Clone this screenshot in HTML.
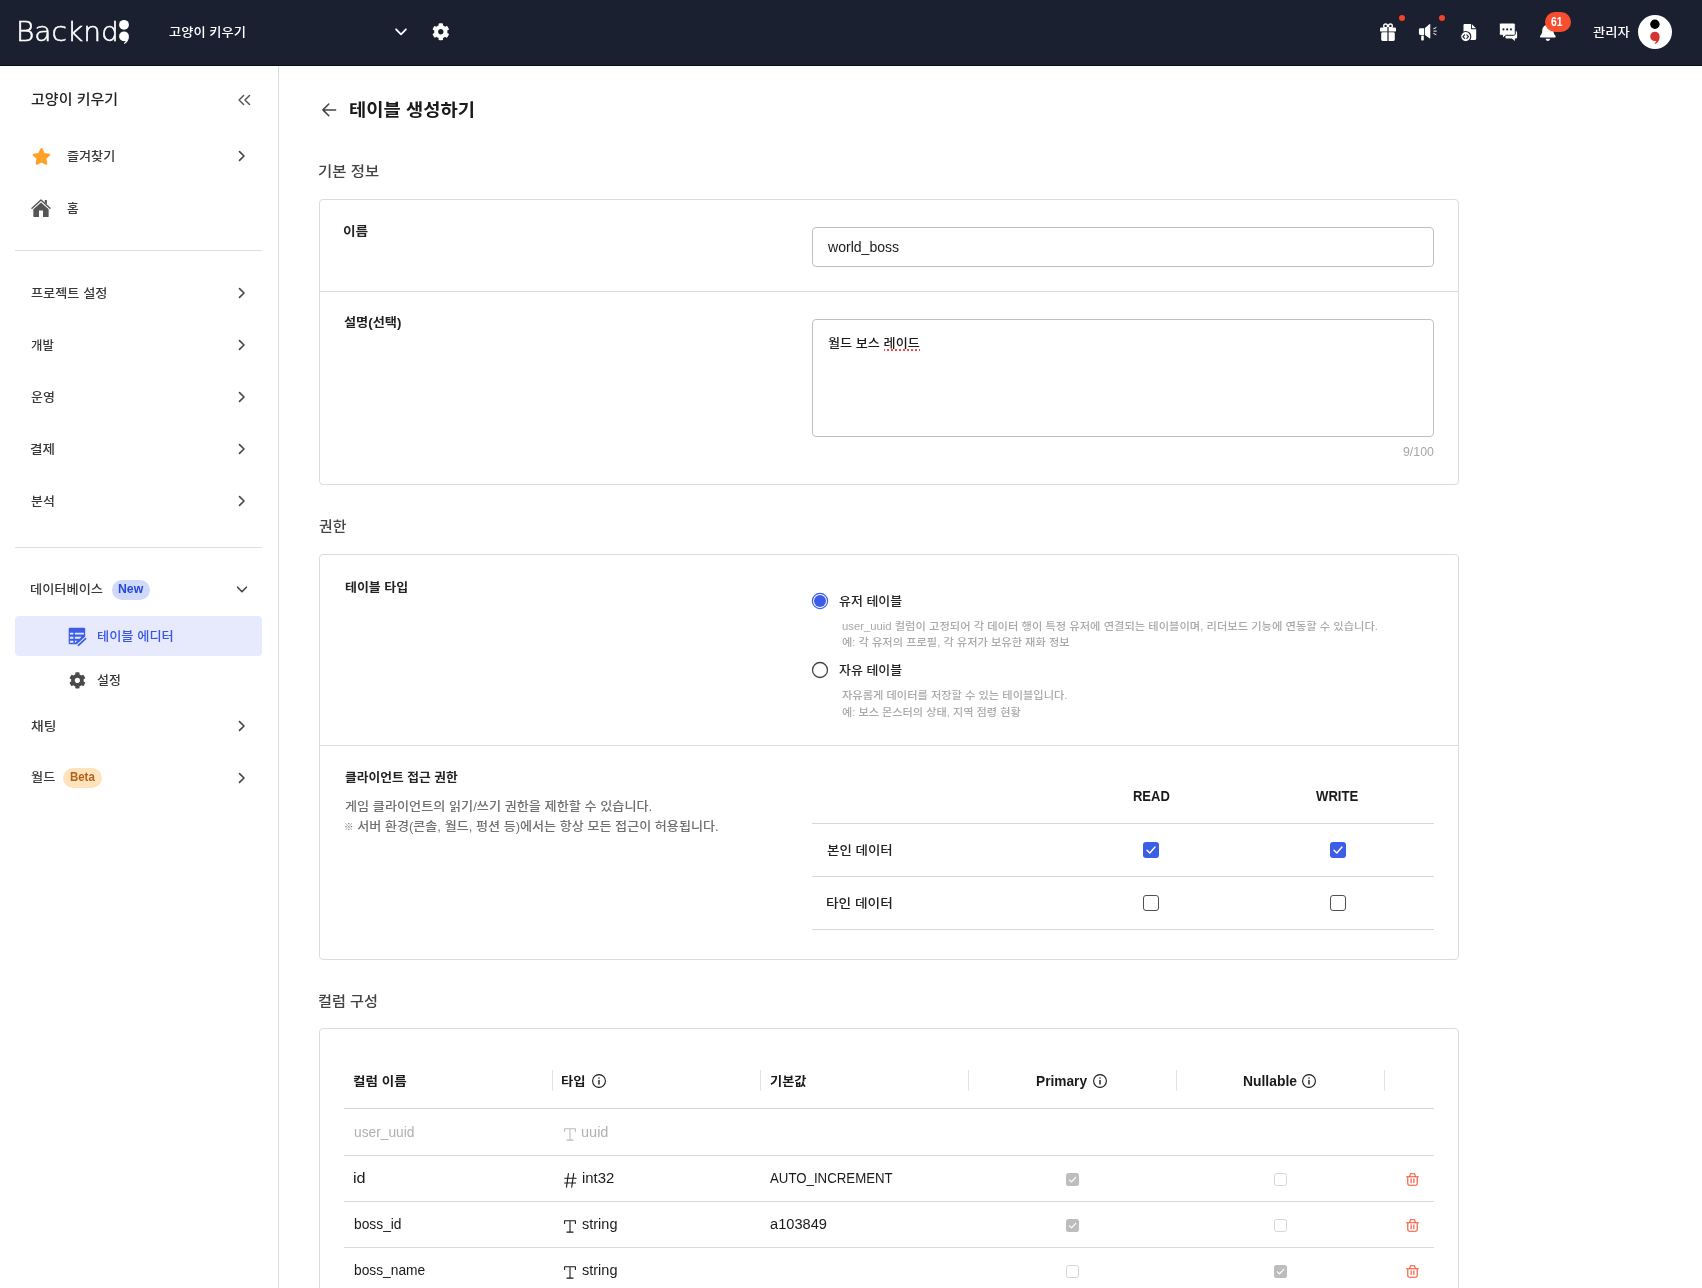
<!DOCTYPE html>
<html lang="ko">
<head>
<meta charset="utf-8">
<title>테이블 생성하기</title>
<style>
*{box-sizing:border-box;margin:0;padding:0}
html,body{width:1702px;height:1288px;overflow:hidden;background:#fff}
body{font-family:"Liberation Sans","Noto Sans CJK KR",sans-serif;font-size:14px;color:#1f1f1f;position:relative}
.a{position:absolute}
.t{position:absolute;white-space:nowrap;line-height:20px;transform-origin:0 0}
#tx{position:absolute;left:0;top:0;width:1702px;height:1288px;will-change:transform}
svg{display:block;position:absolute;overflow:visible}
#hd{position:absolute;left:0;top:0;width:1702px;height:66px;background:#1b2030;border-bottom:1px solid #0c101d}
#sb{position:absolute;left:0;top:66px;width:279px;height:1222px;border-right:1px solid #dcdcdc;background:#fff}
.hr{position:absolute;height:1px;background:#dedede}
.card{position:absolute;left:319px;width:1140px;border:1px solid #dcdcdc;border-radius:4px;background:#fff}
.inp{position:absolute;left:812px;width:622px;border:1px solid #c0c0c0;border-radius:4px;background:#fff}
.cbk{position:absolute;width:16px;height:16px;border-radius:3px;background:#3b5de7}
.cbu{position:absolute;width:16px;height:16px;border-radius:3px;border:1.5px solid #505050;background:#fff}
.cg{position:absolute;width:13px;height:13px;border-radius:2.5px;background:#bdbdbd}
.cgu{position:absolute;width:13px;height:13px;border-radius:2.5px;border:1px solid #d6d6d6;background:#fff}
.vs{position:absolute;width:1px;height:21px;top:1070px;background:#e2e2e2}
</style>
</head>
<body>
<!-- ================= HEADER ================= -->
<div id="hd"></div>
<!-- logo dots -->
<svg style="left:117px;top:18px" width="14" height="28" viewBox="0 0 14 28">
  <circle cx="7" cy="6.8" r="4.9" fill="#fff"/>
  <path d="M7 13.4a4.9 4.9 0 1 1 0 9.8a4.9 4.9 0 0 1 0-9.8zM11.9 18.3c.2 3.2-1.2 5.9-4.4 7.6l-.6-.8c1.6-1.2 2.2-2.4 2-3.6z" fill="#fff"/>
</svg>
<!-- chevron down -->
<svg style="left:394px;top:27px" width="14" height="10" viewBox="0 0 14 10"><path d="M2.1 2.300l4.900 5 4.900-5" fill="none" stroke="#fff" stroke-width="1.8" stroke-linecap="round" stroke-linejoin="round"/></svg>
<!-- gear -->
<svg style="left:432.2px;top:23.2px" width="17.6" height="17.6" viewBox="0 0 512 512"><path fill="#fff" d="M487.4 315.700l-42.600-24.600c4.300-23.200 4.300-47 0-70.200l42.600-24.600c4.900-2.800 7.100-8.600 5.500-14-11.100-35.600-30-67.800-54.700-94.600-3.800-4.100-10-5.100-14.800-2.300L380.800 110c-17.900-15.400-38.500-27.300-60.800-35.100V25.800c0-5.600-3.900-10.500-9.400-11.700-36.700-8.200-74.300-7.800-109.200 0-5.500 1.200-9.400 6.100-9.400 11.700V75c-22.200 7.900-42.800 19.800-60.800 35.100L88.700 85.500c-4.900-2.800-11-1.900-14.800 2.300-24.700 26.700-43.600 58.900-54.700 94.600-1.700 5.400.6 11.200 5.500 14L67.300 221c-4.300 23.200-4.300 47 0 70.200l-42.600 24.600c-4.900 2.800-7.100 8.600-5.500 14 11.100 35.600 30 67.800 54.700 94.600 3.800 4.100 10 5.100 14.800 2.300l42.600-24.600c17.900 15.400 38.500 27.300 60.800 35.100v49.200c0 5.600 3.900 10.500 9.400 11.700 36.700 8.200 74.300 7.800 109.200 0 5.500-1.200 9.400-6.100 9.400-11.700v-49.200c22.200-7.900 42.800-19.800 60.800-35.100l42.600 24.600c4.900 2.800 11 1.900 14.800-2.300 24.700-26.700 43.600-58.900 54.700-94.600 1.500-5.500-.7-11.300-5.600-14.100zM256 336c-44.100 0-80-35.900-80-80s35.900-80 80-80 80 35.900 80 80-35.900 80-80 80z"/></svg>
<!-- gift -->
<svg style="left:1380px;top:23px" width="16" height="18" viewBox="0 0 16 18">
  <circle cx="5.6" cy="2.9" r="1.9" fill="none" stroke="#fff" stroke-width="1.4"/>
  <circle cx="10.4" cy="2.9" r="1.9" fill="none" stroke="#fff" stroke-width="1.4"/>
  <rect x="0" y="4.4" width="16" height="4.2" rx="1.2" fill="#fff"/>
  <rect x="1.2" y="9.2" width="13.6" height="8.8" rx="1.4" fill="#fff"/>
  <rect x="7.4" y="4" width="1.2" height="14.2" fill="#1b2030"/>
</svg>
<div class="a" style="left:1399px;top:15px;width:6px;height:6px;border-radius:3px;background:#f5432a"></div>
<!-- megaphone -->
<svg style="left:1418px;top:23px" width="19" height="18" viewBox="0 0 19 18">
  <path fill="#fff" d="M2.300 5.200h3.800v6.800h-3.800a1.400 1.400 0 0 1-1.400-1.400v-4a1.400 1.400 0 0 1 1.400-1.400z"/>
  <path fill="#fff" d="M6.900 4.900l4.500-3.700c.4-.3.900-.1.900.4v13.200c0 .5-.5.800-.9.400l-4.500-3.100z"/>
  <rect x="3.200" y="12.400" width="2.600" height="5" rx=".6" fill="#fff"/>
  <path d="M15.700 5.700l2.300-1.100M15.900 8.100h2.400M15.700 10.500l2.300 1.100" stroke="#fff" stroke-width="1" stroke-linecap="round" fill="none"/>
</svg>
<div class="a" style="left:1439px;top:15px;width:6px;height:6px;border-radius:3px;background:#f5432a"></div>
<!-- doc -->
<svg style="left:1460px;top:23px" width="17" height="18" viewBox="0 0 17 18">
  <path fill="#fff" d="M4.700 1h6.300v4.200c0 .6.400 1 1 1h4.200v9.600c0 .7-.5 1.200-1.200 1.200h-10.300c-.7 0-1.200-.5-1.200-1.200v-13.600c0-.7.500-1.200 1.200-1.200z"/>
  <path fill="#fff" d="M11.900 1.200l4.100 4.100h-3.500c-.3 0-.6-.3-.6-.6z"/>
  <circle cx="5.700" cy="13.600" r="5.100" fill="#fff" stroke="#1b2030" stroke-width="1.100"/>
  <path d="M4.600 11.900l-1.700 1.700 1.700 1.700M6.800 11.900l1.700 1.700-1.700 1.700" fill="none" stroke="#1b2030" stroke-width="1.100" stroke-linecap="round" stroke-linejoin="round"/>
</svg>
<!-- chat -->
<svg style="left:1499px;top:22px" width="19" height="20" viewBox="0 0 19 20">
  <path fill="#fff" d="M8 9h8.400c1 0 1.700.7 1.700 1.700v4.200c0 1-.7 1.700-1.700 1.700h-.6l.2 2.300-3.200-2.300h-4.800c-1 0-1.700-.7-1.700-1.700v-4.200c0-1 .7-1.700 1.700-1.700z"/>
  <path fill="#fff" stroke="#1b2030" stroke-width="1" d="M2.100 1h12.400c1 0 1.800.8 1.800 1.800v8.700c0 1-.8 1.800-1.800 1.800h-7.300l-3.900 3 .3-3h-1.500c-1 0-1.800-.8-1.800-1.800v-8.700c0-1 .8-1.800 1.800-1.800z"/>
  <circle cx="4.500" cy="7.400" r="1.050" fill="#1b2030"/><circle cx="8.200" cy="7.400" r="1.050" fill="#1b2030"/><circle cx="11.900" cy="7.400" r="1.050" fill="#1b2030"/>
</svg>
<!-- bell -->
<svg style="left:1540.200px;top:23.200px" width="15.700" height="17.950" viewBox="0 0 448 512"><path fill="#fff" d="M224 512c35.320 0 63.970-28.650 63.970-64H160.030c0 35.350 28.650 64 63.970 64zm215.390-149.710c-19.320-20.760-55.470-51.990-55.470-154.290 0-77.700-54.480-139.900-127.940-155.160V32c0-17.670-14.320-32-31.980-32s-31.980 14.330-31.980 32v20.840C118.560 68.100 64.080 130.300 64.080 208c0 102.300-36.150 133.530-55.470 154.290-6 6.450-8.660 14.160-8.610 21.710.11 16.400 12.980 32 32.100 32h383.800c19.120 0 32-15.600 32.100-32 .05-7.550-2.610-15.270-8.610-21.710z"/></svg>
<div class="a" style="left:1545px;top:12px;width:26px;height:20px;border-radius:10px;background:#f94d2f"></div>
<!-- avatar -->
<svg style="left:1638px;top:15px" width="34" height="34" viewBox="0 0 34 34">
  <circle cx="17" cy="17" r="17" fill="#fff"/>
  <circle cx="16.900" cy="9.300" r="4.700" fill="#000"/>
  <path d="M16.900 16.700a4.700 4.700 0 1 1 0 9.400a4.700 4.700 0 0 1 0-9.400zM21.600 21.400c.2 3.200-1.200 5.900-4.400 7.600l-.6-.8c1.600-1.200 2.200-2.400 2-3.600z" fill="#d8322f"/>
</svg>
<!-- ================= SIDEBAR ================= -->
<div id="sb"></div>
<!-- collapse -->
<svg style="left:237px;top:94px" width="14" height="12" viewBox="0 0 14 12"><path d="M6.600 1.500L2.100 6l4.500 4.500M12.500 1.500L8 6l4.500 4.500" fill="none" stroke="#555" stroke-width="1.500" stroke-linecap="round" stroke-linejoin="round"/></svg>
<!-- star -->
<svg style="left:31.700px;top:147.800px" width="18.900" height="16.800" viewBox="0 0 576 512"><path fill="#ffa126" d="M259.300 17.800L194 150.200 47.900 171.500c-26.200 3.800-36.700 36.100-17.700 54.600l105.700 103-25 145.500c-4.500 26.300 23.200 46 46.400 33.700L288 439.600l130.700 68.700c23.200 12.200 50.900-7.400 46.400-33.700l-25-145.500 105.700-103c19-18.500 8.500-50.800-17.700-54.600L382 150.200 316.700 17.800c-11.700-23.600-45.600-23.900-57.400 0z"/></svg>
<!-- home -->
<svg style="left:31px;top:198px" width="20" height="20" viewBox="0 0 20 20">
  <path d="M1 10.200L10 2l9 8.200" fill="none" stroke="#555" stroke-width="1.400" stroke-linecap="round" stroke-linejoin="round"/>
  <path d="M13.800 2h2.100v4.400l-2.100-1.900z" fill="#555"/>
  <path fill="#555" d="M10 4.400l7.650 6.900v6.900c0 .5-.4.900-.9.900h-4.750v-6.700h-4v6.700h-4.750c-.5 0-.9-.4-.9-.9v-6.900z"/>
</svg>
<!-- chevrons right -->
<svg style="left:238px;top:150px" width="8" height="12" viewBox="0 0 8 12"><path d="M1.500 1.600L6 6l-4.500 4.400" fill="none" stroke="#444" stroke-width="1.600" stroke-linecap="round" stroke-linejoin="round"/></svg>
<svg style="left:238px;top:287px" width="8" height="12" viewBox="0 0 8 12"><path d="M1.500 1.600L6 6l-4.500 4.400" fill="none" stroke="#444" stroke-width="1.600" stroke-linecap="round" stroke-linejoin="round"/></svg>
<svg style="left:238px;top:339px" width="8" height="12" viewBox="0 0 8 12"><path d="M1.500 1.600L6 6l-4.500 4.400" fill="none" stroke="#444" stroke-width="1.600" stroke-linecap="round" stroke-linejoin="round"/></svg>
<svg style="left:238px;top:391px" width="8" height="12" viewBox="0 0 8 12"><path d="M1.500 1.600L6 6l-4.500 4.400" fill="none" stroke="#444" stroke-width="1.600" stroke-linecap="round" stroke-linejoin="round"/></svg>
<svg style="left:238px;top:443px" width="8" height="12" viewBox="0 0 8 12"><path d="M1.500 1.600L6 6l-4.500 4.400" fill="none" stroke="#444" stroke-width="1.600" stroke-linecap="round" stroke-linejoin="round"/></svg>
<svg style="left:238px;top:495px" width="8" height="12" viewBox="0 0 8 12"><path d="M1.500 1.600L6 6l-4.500 4.400" fill="none" stroke="#444" stroke-width="1.600" stroke-linecap="round" stroke-linejoin="round"/></svg>
<svg style="left:238px;top:720px" width="8" height="12" viewBox="0 0 8 12"><path d="M1.500 1.600L6 6l-4.500 4.400" fill="none" stroke="#444" stroke-width="1.600" stroke-linecap="round" stroke-linejoin="round"/></svg>
<svg style="left:238px;top:772px" width="8" height="12" viewBox="0 0 8 12"><path d="M1.500 1.600L6 6l-4.500 4.400" fill="none" stroke="#444" stroke-width="1.600" stroke-linecap="round" stroke-linejoin="round"/></svg>
<!-- chevron down (database) -->
<svg style="left:236px;top:585px" width="12" height="9" viewBox="0 0 12 9"><path d="M1.600 2.200L6 6.700l4.400-4.500" fill="none" stroke="#444" stroke-width="1.600" stroke-linecap="round" stroke-linejoin="round"/></svg>
<div class="hr" style="left:15px;width:247px;top:250px"></div>
<div class="hr" style="left:15px;width:247px;top:547px"></div>
<!-- badges -->
<div class="a" style="left:112px;top:580px;width:38px;height:20px;border-radius:10px;background:#d0d9fa"></div>
<div class="a" style="left:63px;top:768px;width:39px;height:20px;border-radius:10px;background:#ffe3bd"></div>
<!-- active item -->
<div class="a" style="left:15px;top:616px;width:247px;height:40px;border-radius:4px;background:#e6eafc"></div>
<!-- table-edit icon -->
<svg style="left:68px;top:627px" width="19" height="20" viewBox="0 0 19 20">
  <path fill="#3b5de7" d="M1.700.8h14.500a1 1 0 0 1 1 1v7.800L8.800 17.300h-7.100a1 1 0 0 1-1-1v-14.500a1 1 0 0 1 1-1z"/>
  <path fill="#e6eafc" d="M1.900 5.800h3.500v1.800h-3.500zM6.900 5.800h9v1.800h-9zM1.900 9.800h3.500v1.900h-3.500zM6.900 9.800h6.700l-2 1.900h-4.700zM1.900 13.800h3.500v1.900h-3.500zM6.900 13.800h2.400l-2 1.900h-.4z"/>
  <path d="M10.400 18.300l7.200-6.700" stroke="#3b5de7" stroke-width="1.700" stroke-linecap="round" fill="none"/>
</svg>
<!-- gear (settings) -->
<svg style="left:68.600px;top:671.600px" width="16.800" height="16.800" viewBox="0 0 512 512"><path fill="#4a4a4a" d="M487.400 315.700l-42.600-24.600c4.300-23.200 4.300-47 0-70.200l42.600-24.600c4.900-2.800 7.100-8.600 5.500-14-11.100-35.600-30-67.800-54.700-94.600-3.800-4.100-10-5.100-14.800-2.300L380.800 110c-17.900-15.400-38.500-27.300-60.800-35.100V25.800c0-5.600-3.900-10.500-9.400-11.700-36.700-8.200-74.300-7.800-109.200 0-5.500 1.200-9.400 6.100-9.400 11.700V75c-22.200 7.900-42.800 19.800-60.800 35.100L88.700 85.500c-4.900-2.800-11-1.900-14.800 2.300-24.700 26.700-43.600 58.900-54.700 94.600-1.700 5.400.6 11.200 5.500 14L67.300 221c-4.300 23.200-4.300 47 0 70.200l-42.600 24.600c-4.900 2.800-7.100 8.600-5.500 14 11.100 35.600 30 67.800 54.700 94.600 3.800 4.100 10 5.100 14.800 2.300l42.600-24.600c17.900 15.400 38.500 27.300 60.800 35.100v49.200c0 5.600 3.900 10.500 9.400 11.700 36.700 8.200 74.300 7.800 109.200 0 5.500-1.200 9.400-6.100 9.400-11.700v-49.200c22.200-7.900 42.800-19.800 60.800-35.100l42.600 24.600c4.900 2.800 11 1.900 14.800-2.300 24.700-26.700 43.600-58.900 54.700-94.600 1.500-5.500-.7-11.300-5.600-14.100zM256 336c-44.100 0-80-35.900-80-80s35.900-80 80-80 80 35.900 80 80-35.900 80-80 80z"/></svg>
<!-- ================= MAIN ================= -->
<!-- back arrow -->
<svg style="left:321px;top:103px" width="16" height="14" viewBox="0 0 16 14"><path d="M14.600 6.900H2M7.800 1L1.900 6.900l5.900 5.900" fill="none" stroke="#444" stroke-width="1.500" stroke-linecap="round" stroke-linejoin="round"/></svg>

<!-- card 1 : 기본 정보 -->
<div class="card" style="top:199px;height:286px"></div>
<div class="hr" style="left:320px;width:1138px;top:291px;background:#dcdcdc"></div>
<div class="inp" style="top:227px;height:40px"></div>
<div class="inp" style="top:319px;height:118px"></div>
<!-- spellcheck dotted underline -->
<svg style="left:884px;top:349px" width="36" height="2" viewBox="0 0 36 2"><path d="M0 1h36" stroke="#ff4242" stroke-width="2" stroke-dasharray="2 2" stroke-dashoffset="1" fill="none"/></svg>

<!-- card 2 : 권한 -->
<div class="card" style="top:554px;height:406px"></div>
<div class="hr" style="left:320px;width:1138px;top:745px;background:#dcdcdc"></div>
<!-- radios -->
<svg style="left:811px;top:592px" width="18" height="18" viewBox="0 0 18 18"><circle cx="9" cy="9" r="7.600" fill="#fff" stroke="#3b5de7" stroke-width="1.200"/><circle cx="9" cy="9" r="6" fill="#3b5de7"/></svg>
<svg style="left:811px;top:661px" width="18" height="18" viewBox="0 0 18 18"><circle cx="9" cy="9" r="7.500" fill="#fff" stroke="#444" stroke-width="1.300"/></svg>
<!-- permission table -->
<div class="hr" style="left:812px;width:622px;top:823px;background:#d8d8d8"></div>
<div class="hr" style="left:812px;width:622px;top:876px;background:#d8d8d8"></div>
<div class="hr" style="left:812px;width:622px;top:929px;background:#d8d8d8"></div>
<div class="cbk" style="left:1143px;top:842px"></div>
<div class="cbk" style="left:1330px;top:842px"></div>
<svg style="left:1143px;top:842px" width="16" height="16" viewBox="0 0 16 16"><path d="M4 8.300l2.800 2.700L12 5" fill="none" stroke="#fff" stroke-width="1.400" stroke-linecap="round" stroke-linejoin="round"/></svg>
<svg style="left:1330px;top:842px" width="16" height="16" viewBox="0 0 16 16"><path d="M4 8.300l2.800 2.700L12 5" fill="none" stroke="#fff" stroke-width="1.400" stroke-linecap="round" stroke-linejoin="round"/></svg>
<div class="cbu" style="left:1143px;top:895px"></div>
<div class="cbu" style="left:1330px;top:895px"></div>

<!-- card 3 : 컬럼 구성 -->
<div class="card" style="top:1028px;height:300px"></div>
<div class="vs" style="left:552px"></div><div class="vs" style="left:760px"></div><div class="vs" style="left:968px"></div><div class="vs" style="left:1176px"></div><div class="vs" style="left:1384px"></div>
<div class="hr" style="left:344px;width:1090px;top:1108px;background:#d4d4d4"></div>
<div class="hr" style="left:344px;width:1090px;top:1155px;background:#dadada"></div>
<div class="hr" style="left:344px;width:1090px;top:1201px;background:#dadada"></div>
<div class="hr" style="left:344px;width:1090px;top:1247px;background:#dadada"></div>
<!-- info icons -->
<svg style="left:592px;top:1074px" width="14" height="14" viewBox="0 0 14 14"><circle cx="7" cy="7" r="6.400" fill="none" stroke="#1a1a1a" stroke-width="1.100"/><circle cx="7" cy="4.100" r=".75" fill="#1a1a1a"/><path d="M7 6.500v3.500" stroke="#1a1a1a" stroke-width="1.400" stroke-linecap="round"/></svg>
<svg style="left:1093px;top:1074px" width="14" height="14" viewBox="0 0 14 14"><circle cx="7" cy="7" r="6.400" fill="none" stroke="#1a1a1a" stroke-width="1.100"/><circle cx="7" cy="4.100" r=".75" fill="#1a1a1a"/><path d="M7 6.500v3.500" stroke="#1a1a1a" stroke-width="1.400" stroke-linecap="round"/></svg>
<svg style="left:1302px;top:1074px" width="14" height="14" viewBox="0 0 14 14"><circle cx="7" cy="7" r="6.400" fill="none" stroke="#1a1a1a" stroke-width="1.100"/><circle cx="7" cy="4.100" r=".75" fill="#1a1a1a"/><path d="M7 6.500v3.500" stroke="#1a1a1a" stroke-width="1.400" stroke-linecap="round"/></svg>
<!-- type icons: T(gray) # T T -->
<svg style="left:564px;top:1127.800px" width="12" height="13" viewBox="0 0 12 13"><path d="M.6 3.400V.8h10.800v2.600M6 .8v11.300M2.900 12.100h6.200" fill="none" stroke="#bcbcbc" stroke-width="1.100" stroke-linecap="round" stroke-linejoin="round"/></svg>
<svg style="left:563.500px;top:1172.600px" width="13" height="15" viewBox="0 0 13 15"><path d="M.8 5.300h11.400M.6 10h11M4.400.6L2.500 14.200M9.700.6L7.700 14.200" fill="none" stroke="#1a1a1a" stroke-width="1.100" stroke-linecap="round"/></svg>
<svg style="left:564px;top:1219.800px" width="12" height="13" viewBox="0 0 12 13"><path d="M.6 3.400V.8h10.800v2.600M6 .8v11.300M2.900 12.100h6.200" fill="none" stroke="#1a1a1a" stroke-width="1.100" stroke-linecap="round" stroke-linejoin="round"/></svg>
<svg style="left:564px;top:1265.800px" width="12" height="13" viewBox="0 0 12 13"><path d="M.6 3.400V.8h10.800v2.600M6 .8v11.300M2.900 12.100h6.200" fill="none" stroke="#1a1a1a" stroke-width="1.100" stroke-linecap="round" stroke-linejoin="round"/></svg>
<!-- gray checkboxes -->
<div class="cg" style="left:1065.500px;top:1172.500px"></div>
<svg style="left:1065.500px;top:1172.500px" width="13" height="13" viewBox="0 0 13 13"><path d="M3.400 6.800l2.100 2.100L9.700 4.300" fill="none" stroke="#fff" stroke-width="1.200" stroke-linecap="round" stroke-linejoin="round"/></svg>
<div class="cgu" style="left:1273.500px;top:1172.500px"></div>
<div class="cg" style="left:1065.500px;top:1218.500px"></div>
<svg style="left:1065.500px;top:1218.500px" width="13" height="13" viewBox="0 0 13 13"><path d="M3.400 6.800l2.100 2.100L9.700 4.300" fill="none" stroke="#fff" stroke-width="1.200" stroke-linecap="round" stroke-linejoin="round"/></svg>
<div class="cgu" style="left:1273.500px;top:1218.500px"></div>
<div class="cgu" style="left:1065.500px;top:1264.500px"></div>
<div class="cg" style="left:1273.500px;top:1264.500px"></div>
<svg style="left:1273.500px;top:1264.500px" width="13" height="13" viewBox="0 0 13 13"><path d="M3.400 6.800l2.100 2.100L9.700 4.300" fill="none" stroke="#fff" stroke-width="1.200" stroke-linecap="round" stroke-linejoin="round"/></svg>
<!-- trash icons -->
<svg style="left:1405.500px;top:1172.500px" width="13" height="13" viewBox="0 0 13 13"><path d="M.6 3.800h11.800M3.600 3.600L4.400.8h4.200l.8 2.800M1.800 3.900v6.900c0 .8.600 1.400 1.400 1.400h6.600c.8 0 1.400-.6 1.400-1.400V3.900M5.100 5.900v3.600M7.900 5.900v3.600" fill="none" stroke="#f9502f" stroke-width="1.100" stroke-linecap="round" stroke-linejoin="round"/></svg>
<svg style="left:1405.500px;top:1218.500px" width="13" height="13" viewBox="0 0 13 13"><path d="M.6 3.800h11.800M3.600 3.600L4.400.8h4.200l.8 2.800M1.800 3.900v6.900c0 .8.600 1.400 1.400 1.400h6.600c.8 0 1.400-.6 1.400-1.400V3.900M5.100 5.900v3.600M7.900 5.900v3.600" fill="none" stroke="#f9502f" stroke-width="1.100" stroke-linecap="round" stroke-linejoin="round"/></svg>
<svg style="left:1405.500px;top:1264.500px" width="13" height="13" viewBox="0 0 13 13"><path d="M.6 3.800h11.800M3.600 3.600L4.400.8h4.200l.8 2.800M1.800 3.900v6.900c0 .8.600 1.400 1.400 1.400h6.600c.8 0 1.400-.6 1.400-1.400V3.900M5.100 5.900v3.600M7.900 5.900v3.600" fill="none" stroke="#f9502f" stroke-width="1.100" stroke-linecap="round" stroke-linejoin="round"/></svg>
<!-- ================= TEXT ================= -->
<div id="tx">
<div class="t" style="left:15.8px;top:12.3px;font-size:27px;line-height:40px;color:#fff;transform:scaleX(1.0376)"><span style="font-family:'DejaVu Sans','Liberation Sans',sans-serif;font-weight:200;-webkit-text-stroke:.55px #fff">Backnd</span></div>
<div class="t" style="left:168.8px;top:22.9px;font-size:12.3px;font-weight:500;color:#fff;transform:scaleX(1.0786)">고양이 키우기</div>
<div class="t" style="left:1592.8px;top:23.0px;font-size:12.3px;font-weight:500;color:#fff;transform:scaleX(1.0824)">관리자</div>
<div class="t" style="left:1551.1px;top:11.5px;font-size:12px;font-weight:700;color:#fff;transform:scaleX(0.8571)">61</div>
<div class="t" style="left:31.3px;top:89.0px;font-size:14.1px;font-weight:500;color:#222;transform:scaleX(1.0662)">고양이 키우기</div>
<div class="t" style="left:67.0px;top:146.9px;font-size:12.3px;font-weight:500;color:#383838;transform:scaleX(1.0659)">즐겨찾기</div>
<div class="t" style="left:67.0px;top:199.0px;font-size:12.3px;font-weight:500;color:#383838;transform:scaleX(1.0273)">홈</div>
<div class="t" style="left:31.4px;top:284.0px;font-size:12.3px;font-weight:500;color:#383838;transform:scaleX(1.0714)">프로젝트 설정</div>
<div class="t" style="left:31.4px;top:335.6px;font-size:12.3px;font-weight:500;color:#383838;transform:scaleX(1.0087)">개발</div>
<div class="t" style="left:31.4px;top:387.7px;font-size:12.3px;font-weight:500;color:#383838;transform:scaleX(1.0545)">운영</div>
<div class="t" style="left:30.3px;top:439.7px;font-size:12.3px;font-weight:500;color:#383838;transform:scaleX(1.1048)">결제</div>
<div class="t" style="left:31.4px;top:491.7px;font-size:12.3px;font-weight:500;color:#383838;transform:scaleX(1.0545)">분석</div>
<div class="t" style="left:30.0px;top:580.0px;font-size:12.3px;font-weight:500;color:#383838;transform:scaleX(1.0746)">데이터베이스</div>
<div class="t" style="left:117.7px;top:579.4px;font-size:12.5px;font-weight:700;color:#2747d8;transform:scaleX(0.9800)">New</div>
<div class="t" style="left:96.8px;top:626.8px;font-size:12.3px;font-weight:500;color:#3858e4;transform:scaleX(1.0768)">테이블 에디터</div>
<div class="t" style="left:97.3px;top:671.4px;font-size:12.3px;font-weight:500;color:#383838;transform:scaleX(1.0545)">설정</div>
<div class="t" style="left:31.1px;top:716.9px;font-size:12.3px;font-weight:500;color:#383838;transform:scaleX(1.1238)">채팅</div>
<div class="t" style="left:31.1px;top:768.0px;font-size:12.3px;font-weight:500;color:#383838;transform:scaleX(1.0727)">월드</div>
<div class="t" style="left:69.6px;top:767.4px;font-size:12.5px;font-weight:700;color:#b2621b;transform:scaleX(0.9148)">Beta</div>
<div class="t" style="left:348.6px;top:100.1px;font-size:17.6px;font-weight:700;color:#1a1a1a;transform:scaleX(1.0664)">테이블 생성하기</div>
<div class="t" style="left:318.1px;top:161.0px;font-size:14.1px;font-weight:500;color:#444;transform:scaleX(1.0963)">기본 정보</div>
<div class="t" style="left:343.1px;top:221.6px;font-size:12.3px;font-weight:700;color:#222;transform:scaleX(1.1143)">이름</div>
<div class="t" style="left:828.2px;top:237.1px;font-size:14px;color:#1a1a1a;transform:scaleX(1.0042)">world_boss</div>
<div class="t" style="left:344.2px;top:313.2px;font-size:12.3px;font-weight:700;color:#222;transform:scaleX(1.0717)">설명(선택)</div>
<div class="t" style="left:828.2px;top:334.2px;font-size:12.3px;font-weight:500;color:#1a1a1a;transform:scaleX(1.0674)">월드 보스 레이드</div>
<div class="t" style="left:1402.9px;top:442.1px;font-size:12px;color:#a6a6a6;transform:scaleX(1.0267)">9/100</div>
<div class="t" style="left:319.0px;top:516.3px;font-size:14.1px;font-weight:500;color:#444;transform:scaleX(1.0538)">권한</div>
<div class="t" style="left:344.5px;top:577.5px;font-size:12.3px;font-weight:700;color:#222;transform:scaleX(1.0525)">테이블 타입</div>
<div class="t" style="left:838.8px;top:591.9px;font-size:12.3px;font-weight:500;color:#222;transform:scaleX(1.0533)">유저 테이블</div>
<div class="t" style="left:841.7px;top:616.4px;font-size:10.6px;font-weight:500;color:#a9a9a9;transform:scaleX(1.0657)">user_uuid 컬럼이 고정되어 각 데이터 행이 특정 유저에 연결되는 테이블이며, 리더보드 기능에 연동할 수 있습니다.</div>
<div class="t" style="left:841.7px;top:631.9px;font-size:10.6px;font-weight:500;color:#a9a9a9;transform:scaleX(1.0603)">예: 각 유저의 프로필, 각 유저가 보유한 재화 정보</div>
<div class="t" style="left:838.8px;top:660.9px;font-size:12.3px;font-weight:500;color:#222;transform:scaleX(1.0533)">자유 테이블</div>
<div class="t" style="left:841.7px;top:685.3px;font-size:10.6px;font-weight:500;color:#a9a9a9;transform:scaleX(1.0604)">자유롭게 데이터를 저장할 수 있는 테이블입니다.</div>
<div class="t" style="left:841.7px;top:701.5px;font-size:10.6px;font-weight:500;color:#a9a9a9;transform:scaleX(1.0529)">예: 보스 몬스터의 상태, 지역 점령 현황</div>
<div class="t" style="left:344.6px;top:767.9px;font-size:12.3px;font-weight:700;color:#222;transform:scaleX(1.0367)">클라이언트 접근 권한</div>
<div class="t" style="left:344.6px;top:797.3px;font-size:12.3px;font-weight:500;color:#707070;transform:scaleX(1.0686)">게임 클라이언트의 읽기/쓰기 권한을 제한할 수 있습니다.</div>
<div class="t" style="left:343.5px;top:816.5px;font-size:12.3px;font-weight:500;color:#707070;transform:scaleX(1.0632)"><span style="font-size:9px;font-weight:700;position:relative;top:-1px">※</span> 서버 환경(콘솔, 월드, 펑션 등)에서는 항상 모든 접근이 허용됩니다.</div>
<div class="t" style="left:1132.5px;top:786.3px;font-size:14px;font-weight:700;color:#1a1a1a;transform:scaleX(0.9263)">READ</div>
<div class="t" style="left:1316.1px;top:786.3px;font-size:14px;font-weight:700;color:#1a1a1a;transform:scaleX(0.9378)">WRITE</div>
<div class="t" style="left:827.4px;top:840.6px;font-size:12.3px;font-weight:500;color:#222;transform:scaleX(1.0949)">본인 데이터</div>
<div class="t" style="left:826.3px;top:893.6px;font-size:12.3px;font-weight:500;color:#222;transform:scaleX(1.1138)">타인 데이터</div>
<div class="t" style="left:318.3px;top:991.0px;font-size:14.1px;font-weight:500;color:#444;transform:scaleX(1.0759)">컬럼 구성</div>
<div class="t" style="left:352.8px;top:1072.2px;font-size:12.3px;font-weight:700;color:#1a1a1a;transform:scaleX(1.1021)">컬럼 이름</div>
<div class="t" style="left:561.2px;top:1072.2px;font-size:12.3px;font-weight:700;color:#1a1a1a;transform:scaleX(1.0857)">타입</div>
<div class="t" style="left:769.9px;top:1072.2px;font-size:12.3px;font-weight:700;color:#1a1a1a;transform:scaleX(1.0765)">기본값</div>
<div class="t" style="left:1036.3px;top:1071.4px;font-size:14px;font-weight:700;color:#1a1a1a;transform:scaleX(0.9784)">Primary</div>
<div class="t" style="left:1242.7px;top:1071.4px;font-size:14px;font-weight:700;color:#1a1a1a;transform:scaleX(0.9906)">Nullable</div>
<div class="t" style="left:353.5px;top:1121.8px;font-size:14px;color:#b0b0b0;transform:scaleX(0.9833)">user_uuid</div>
<div class="t" style="left:581.4px;top:1121.8px;font-size:14px;color:#b0b0b0;transform:scaleX(1.0360)">uuid</div>
<div class="t" style="left:353.3px;top:1167.9px;font-size:14px;color:#1a1a1a;transform:scaleX(1.1556)">id</div>
<div class="t" style="left:582.1px;top:1167.9px;font-size:14px;color:#1a1a1a;transform:scaleX(1.0655)">int32</div>
<div class="t" style="left:769.9px;top:1167.9px;font-size:14px;color:#1a1a1a;transform:scaleX(0.9462)">AUTO_INCREMENT</div>
<div class="t" style="left:353.5px;top:1213.9px;font-size:14px;color:#1a1a1a;transform:scaleX(0.9851)">boss_id</div>
<div class="t" style="left:582.0px;top:1213.9px;font-size:14px;color:#1a1a1a;transform:scaleX(1.0353)">string</div>
<div class="t" style="left:769.9px;top:1213.9px;font-size:14px;color:#1a1a1a;transform:scaleX(1.0444)">a103849</div>
<div class="t" style="left:353.5px;top:1259.9px;font-size:14px;color:#1a1a1a;transform:scaleX(0.9845)">boss_name</div>
<div class="t" style="left:582.0px;top:1259.9px;font-size:14px;color:#1a1a1a;transform:scaleX(1.0353)">string</div>
</div>
</body>
</html>
